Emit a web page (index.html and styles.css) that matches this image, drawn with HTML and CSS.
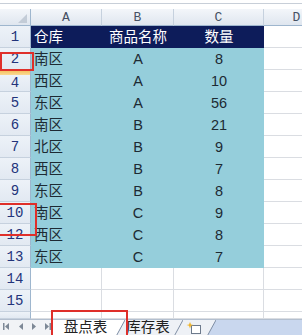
FILE: index.html
```html
<!DOCTYPE html>
<html lang="zh">
<head>
    <meta charset="UTF-8">
    <meta name="viewport" content="width=device-width, initial-scale=1.0">
    <title>盘点表</title>
    <link rel="stylesheet" href="styles.css">
</head>
<body>
    <div class="formula-bar"></div>

    <div class="sheet">
        <div class="grid">
            <div class="corner"></div>
            <div class="ch">A</div>
            <div class="ch">B</div>
            <div class="ch">C</div>
            <div class="ch">D</div>

            <div class="rh">1</div>
            <div class="hd l">仓库</div>
            <div class="hd">商品名称</div>
            <div class="hd">数量</div>
            <div class="c"></div>

            <div class="rh">2</div>
            <div class="dt l">南区</div>
            <div class="dt">A</div>
            <div class="dt">8</div>
            <div class="c"></div>

            <div class="rh hidden-above">4</div>
            <div class="dt l">西区</div>
            <div class="dt">A</div>
            <div class="dt">10</div>
            <div class="c"></div>

            <div class="rh">5</div>
            <div class="dt l">东区</div>
            <div class="dt">A</div>
            <div class="dt">56</div>
            <div class="c"></div>

            <div class="rh">6</div>
            <div class="dt l">南区</div>
            <div class="dt">B</div>
            <div class="dt">21</div>
            <div class="c"></div>

            <div class="rh">7</div>
            <div class="dt l">北区</div>
            <div class="dt">B</div>
            <div class="dt">9</div>
            <div class="c"></div>

            <div class="rh">8</div>
            <div class="dt l">西区</div>
            <div class="dt">B</div>
            <div class="dt">7</div>
            <div class="c"></div>

            <div class="rh">9</div>
            <div class="dt l">东区</div>
            <div class="dt">B</div>
            <div class="dt">8</div>
            <div class="c"></div>

            <div class="rh">10</div>
            <div class="dt l">南区</div>
            <div class="dt">C</div>
            <div class="dt">9</div>
            <div class="c"></div>

            <div class="rh">12</div>
            <div class="dt l">西区</div>
            <div class="dt">C</div>
            <div class="dt">8</div>
            <div class="c"></div>

            <div class="rh">13</div>
            <div class="dt l">东区</div>
            <div class="dt">C</div>
            <div class="dt">7</div>
            <div class="c"></div>

            <div class="rh">14</div>
            <div class="c"></div>
            <div class="c"></div>
            <div class="c"></div>
            <div class="c"></div>

            <div class="rh">15</div>
            <div class="c"></div>
            <div class="c"></div>
            <div class="c"></div>
            <div class="c"></div>

            <div class="rh"></div>
            <div class="c"></div>
            <div class="c"></div>
            <div class="c"></div>
            <div class="c"></div>
        </div>
    </div>

    <div class="tabs">
        <div class="nav">
            <svg width="51" height="14" viewBox="0 0 51 14">
                <g fill="#7d8896">
                    <rect x="3" y="3" width="1.5" height="7"/>
                    <path d="M9 3 L5 6.5 L9 10 Z"/>
                    <path d="M23 3 L19 6.5 L23 10 Z"/>
                    <path d="M32 3 L36 6.5 L32 10 Z"/>
                    <path d="M45 3 L49 6.5 L45 10 Z"/>
                    <rect x="49.5" y="3" width="1.5" height="7"/>
                </g>
            </svg>
        </div>
        <div class="tab active">盘点表</div>
        <svg class="slant" width="12" height="15" viewBox="0 0 12 15">
            <path d="M0 0 H12 L0 22 Z" fill="#fff"/>
            <path d="M12 0 V22 H0 Z" fill="#eef1f6"/>
            <path d="M0 22 L12 0" stroke="#7f8ea4" stroke-width="1"/>
        </svg>
        <div class="tab">库存表</div>
        <svg class="slant" width="12" height="15" viewBox="0 0 12 15">
            <path d="M0 0 H12 V22 H0 Z" fill="#eef1f6"/>
            <path d="M0 22 L12 0" stroke="#7f8ea4" stroke-width="1"/>
        </svg>
        <div class="tab new-sheet">
            <svg width="16" height="14" viewBox="0 0 16 14">
                <rect x="5.5" y="4.5" width="9" height="8" fill="#fff" stroke="#6d7a8c"/>
                <path d="M4 1 L5 3.5 L7.5 4 L5 4.8 L4 7.5 L3 4.8 L0.5 4 L3 3.5 Z" fill="#f0b429"/>
            </svg>
        </div>
        <svg class="slant" width="12" height="15" viewBox="0 0 12 15">
            <path d="M0 0 H12 L0 22 Z" fill="#eef1f6"/>
            <path d="M12 0 V22 H0 Z" fill="#c9d7ee"/>
            <path d="M0 22 L12 0" stroke="#7f8ea4" stroke-width="1"/>
        </svg>
    </div>

    <!-- red highlight boxes drawn over the sheet -->
    <div class="mark mark-row"></div>
    <div class="mark mark-rows"></div>
    <div class="mark mark-tab"></div>
</body>
</html>
```

FILE: styles.css
```css
* {
    box-sizing: border-box;
}
body {
    margin: 0;
    width: 302px;
    height: 335px;
    overflow: hidden;
    position: relative;
    background-color: #fff;
    font-family: "Liberation Sans", "Noto Sans CJK SC", sans-serif;
    color: #222;
}
.formula-bar {
    height: 4px;
    border-bottom: 1px solid #c8cfd8;
    margin-bottom: 5px;
}
.sheet {
    width: 302px;
    overflow: hidden;
}
.grid {
    display: grid;
    grid-template-columns: 31px 71px 72px 90px 66px;
    grid-template-rows: 17px repeat(13, 22px) 7px;
}
.corner {
    position: relative;
    background: linear-gradient(#f3f6fa, #dfe6ef);
    border-right: 1px solid #9eb6ce;
    border-bottom: 1px solid #9eb6ce;
}
.corner::after {
    content: "";
    position: absolute;
    right: 3px;
    bottom: 2px;
    border-left: 9px solid transparent;
    border-bottom: 9px solid #c3ccd7;
}
.ch {
    background: linear-gradient(#f3f6fa, #dfe6ef);
    border-right: 1px solid #c6d1de;
    border-bottom: 1px solid #9eb6ce;
    font-family: "Liberation Mono", monospace;
    font-size: 13px;
    line-height: 17px;
    text-align: center;
    color: #465063;
}
.rh {
    background: linear-gradient(#edf2f8, #e2e9f2);
    border-right: 1px solid #9eb6ce;
    border-bottom: 1px solid #c6d1de;
    font-family: "Liberation Mono", monospace;
    font-size: 14px;
    line-height: 22px;
    text-align: center;
    color: #22337a;
}
.hidden-above {
    background: linear-gradient(#f2bd55, #fad994 5px, #edf2f8 5px, #e2e9f2);
    padding-top: 2px;
}
.c {
    border-right: 1px solid #dadde2;
    border-bottom: 1px solid #dadde2;
}
.hd, .dt {
    font-size: 14.5px;
    line-height: 22px;
    text-align: center;
    white-space: nowrap;
}
.hd {
    background-color: #0d1c5a;
    color: #fff;
}
.dt {
    background-color: #95cedb;
    color: #1d2a33;
}
.l {
    text-align: left;
    padding-left: 3px;
}
.tabs {
    display: flex;
    height: 16px;
    overflow: hidden;
    background-color: #c9d7ee;
    border-top: 1px solid #b3bfcf;
}
.nav {
    width: 51px;
    background-color: #f1f3f6;
}
.tab {
    height: 15px;
    background-color: #eef1f6;
    font-size: 14.5px;
    line-height: 15px;
    text-align: center;
    color: #222;
}
.tab.active {
    width: 62px;
    background-color: #fff;
    border-left: 1px solid #7f8ea4;
    padding-left: 6px;
}
.tab:not(.active):not(.new-sheet) {
    width: 46px;
}
.new-sheet {
    width: 21px;
    padding-top: 1px;
}
.slant {
    display: block;
    flex: none;
}
.mark {
    position: absolute;
    border: 2px solid #df2f2a;
}
.mark-row {
    left: 0;
    top: 52px;
    width: 34px;
    height: 19px;
}
.mark-rows {
    left: -2px;
    top: 203px;
    width: 39px;
    height: 33px;
}
.mark-tab {
    left: 51px;
    top: 310px;
    width: 77px;
    height: 27px;
}
```
